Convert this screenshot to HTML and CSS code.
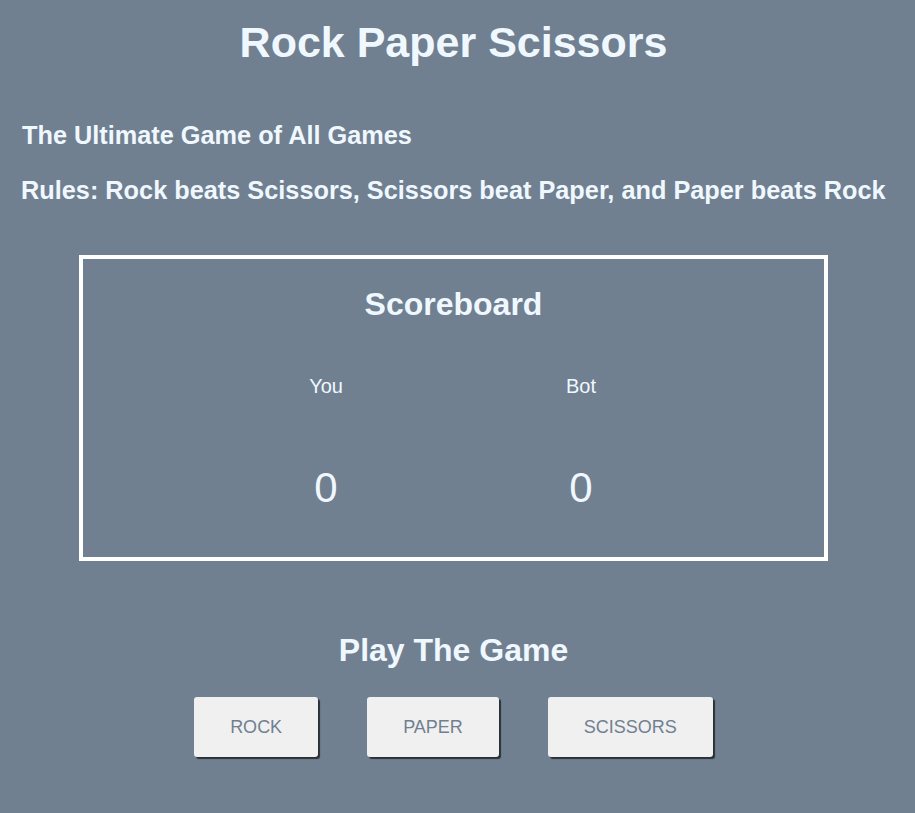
FILE: index.html
```html
<!DOCTYPE html>
<html lang="en">
<head>
<meta charset="utf-8">
<title>Rock Paper Scissors</title>
<link rel="stylesheet" href="styles.css">
</head>
<body>
<main class="page">
  <h1 class="title">Rock Paper Scissors</h1>
  <h2 class="subtitle">The Ultimate Game of All Games</h2>
  <h2 class="subtitle rules">Rules: Rock beats Scissors, Scissors beat Paper, and Paper beats Rock</h2>

  <section class="scoreboard">
    <h2 class="section-title">Scoreboard</h2>
    <div class="score-row">
      <div class="player">
        <div class="player-name">You</div>
        <div class="player-score">0</div>
      </div>
      <div class="player">
        <div class="player-name">Bot</div>
        <div class="player-score">0</div>
      </div>
    </div>
  </section>

  <section class="play">
    <h2 class="section-title play-title">Play The Game</h2>
    <div class="choices">
      <button class="choice">ROCK</button>
      <button class="choice">PAPER</button>
      <button class="choice">SCISSORS</button>
    </div>
  </section>
</main>
</body>
</html>
```

FILE: styles.css
```css
html, body {
  margin: 0;
  padding: 0;
  background: #708090;
}

body {
  font-family: "Liberation Sans", Arial, sans-serif;
  color: #f0f8ff;
}

.page {
  padding: 0 29px 40px 21px;
}

.title {
  margin: 20px 0 0;
  font-size: 43px;
  line-height: 44px;
  font-weight: bold;
  text-align: center;
}

.subtitle {
  margin: 58px 0 0 1px;
  font-size: 25.3px;
  line-height: 26px;
  font-weight: bold;
}

.rules {
  margin-top: 29px;
  margin-left: 0;
}

.scoreboard {
  width: 741px;
  margin: 52px auto 0;
  border: 4px solid #ffffff;
  padding: 29px 0 48px;
  box-sizing: content-box;
}

.section-title {
  margin: 0;
  font-size: 32px;
  line-height: 32px;
  font-weight: bold;
  text-align: center;
}

.score-row {
  display: flex;
  justify-content: center;
  gap: 55px;
  margin-top: 56px;
}

.player {
  width: 200px;
  text-align: center;
}

.player-name {
  font-size: 20px;
  line-height: 20px;
}

.player-score {
  margin-top: 71px;
  font-size: 42px;
  line-height: 42px;
}

.play-title {
  margin-top: 73px;
}

.choices {
  display: flex;
  justify-content: center;
  gap: 49px;
  margin-top: 31px;
}

.choice {
  font-family: "Liberation Sans", Arial, sans-serif;
  font-size: 18px;
  line-height: 18px;
  padding: 21px 36px;
  background: #f0f0f0;
  color: #708090;
  border: none;
  border-radius: 3px;
  box-shadow: 2px 2px 1px #2a3038;
  cursor: pointer;
}
```
